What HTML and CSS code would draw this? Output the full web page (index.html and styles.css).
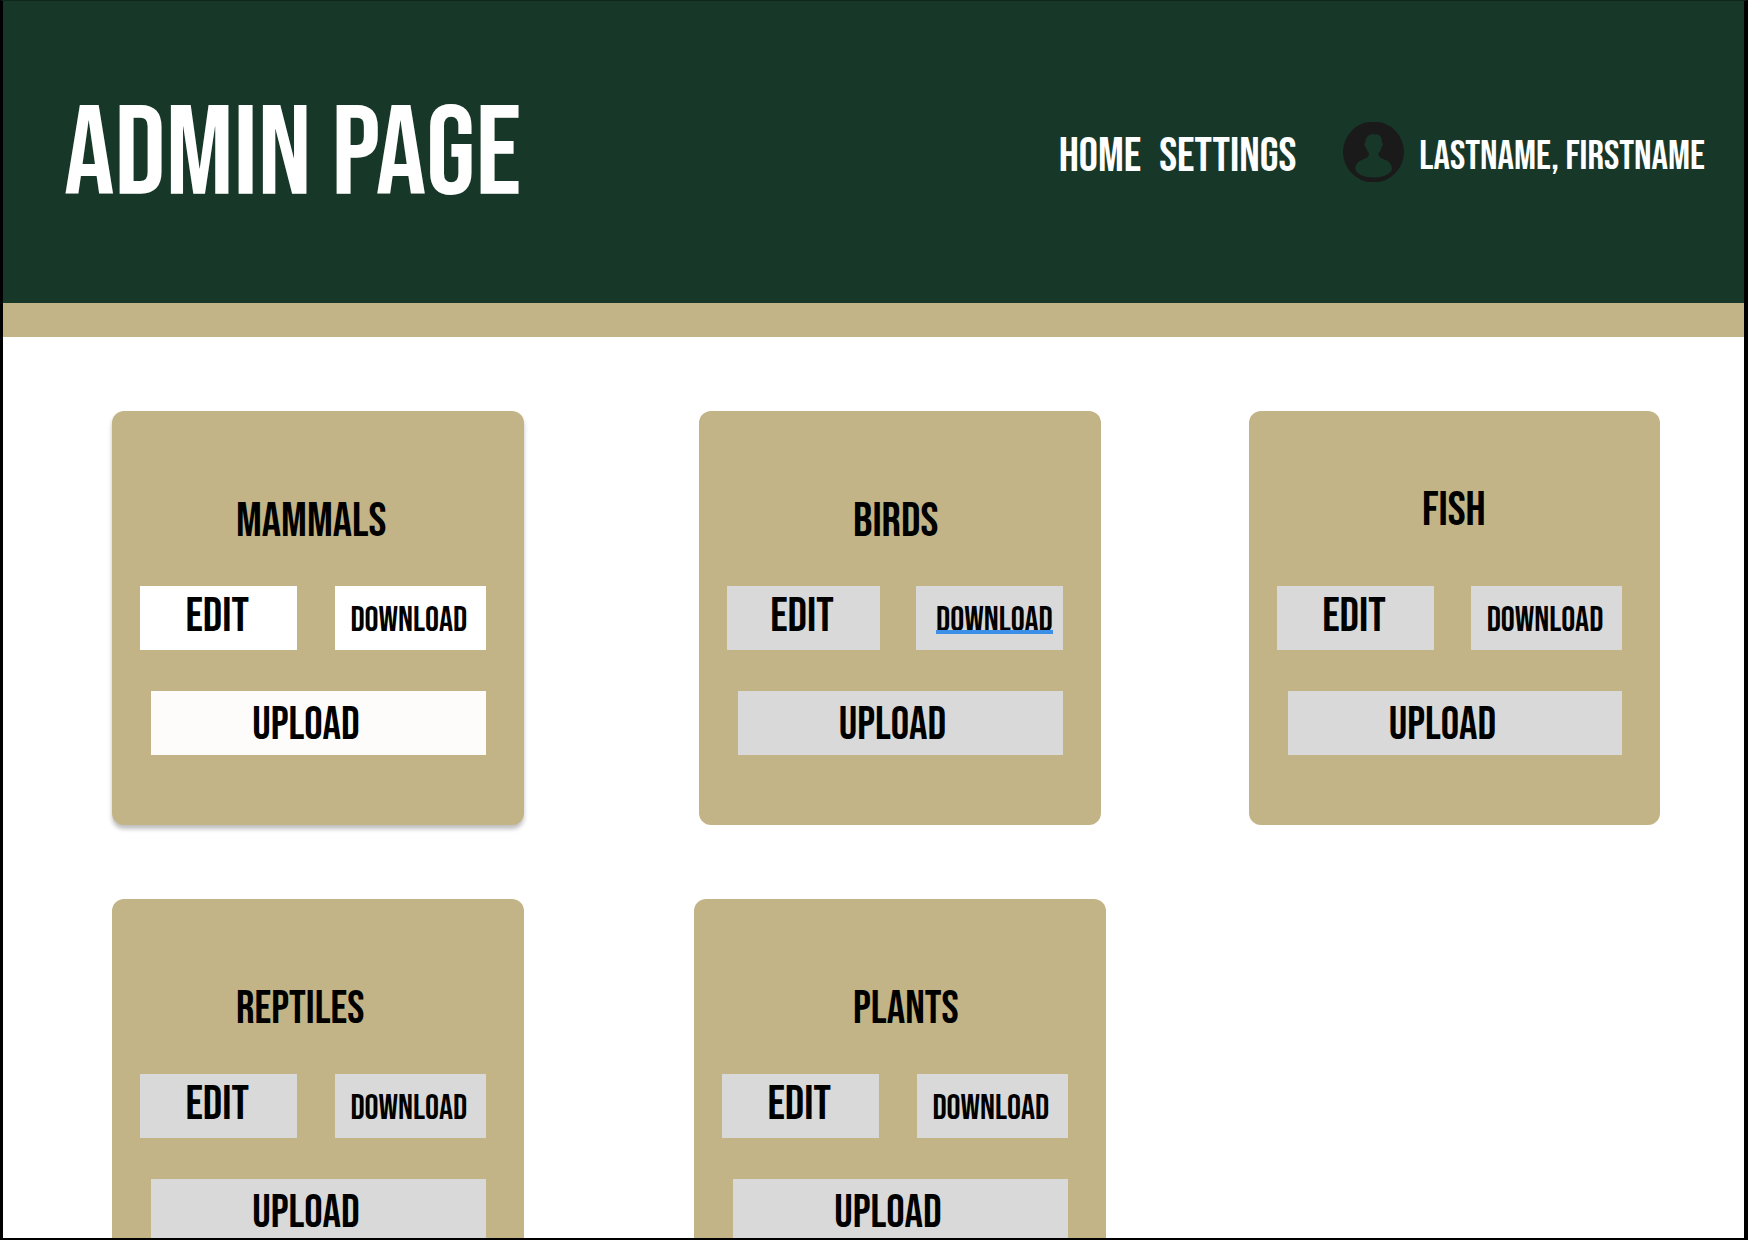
FILE: index.html
```html
<!DOCTYPE html>
<html lang="en">
<head>
<meta charset="utf-8">
<meta name="viewport" content="width=device-width, initial-scale=1">
<title>Admin Page</title>
<link rel="stylesheet" href="styles.css">
</head>
<body>
<div class="frame">
  <header class="header">
    <h1 class="header-title">ADMIN PAGE</h1>
    <nav class="nav">
      <a class="nav-link" href="#home">HOME</a>
      <a class="nav-link" href="#settings">SETTINGS</a>
    </nav>
    <a class="user" href="#profile">
      <svg class="avatar" viewBox="39 36 183 179" aria-hidden="true">
        <circle class="avatar-disc" cx="130.5" cy="125.5" r="91.5"/>
        <path class="avatar-figure" d="M131 72C120 71 106 78 106 97C103 98 103 109 108 112C110 120 113 124 116 128C118 138 114 142 104 146C90 151 76 158 76 176C78 190 98 202 131 202C164 202 184 190 186 176C186 158 172 151 158 146C148 142 144 138 146 128C150 124 153 120 154 112C159 109 160 98 156 97C157 78 146 72 138 73Z"/>
      </svg>
      <span>LASTNAME, FIRSTNAME</span>
    </a>
  </header>
  <main class="cards">
    <section class="card card-active">
      <h2 class="card-title">MAMMALS</h2>
      <div class="actions">
        <button class="btn btn-edit" type="button">EDIT</button>
        <button class="btn btn-download" type="button">DOWNLOAD</button>
        <button class="btn btn-upload" type="button">UPLOAD</button>
      </div>
    </section>
    <section class="card card-middle card-narrow">
      <h2 class="card-title">BIRDS</h2>
      <div class="actions">
        <button class="btn btn-edit" type="button">EDIT</button>
        <button class="btn btn-download" type="button"><span class="marked">DOWNLOAD</span></button>
        <button class="btn btn-upload" type="button">UPLOAD</button>
      </div>
    </section>
    <section class="card card-last">
      <h2 class="card-title">FISH</h2>
      <div class="actions">
        <button class="btn btn-edit" type="button">EDIT</button>
        <button class="btn btn-download" type="button">DOWNLOAD</button>
        <button class="btn btn-upload" type="button">UPLOAD</button>
      </div>
    </section>
    <section class="card card-small-title">
      <h2 class="card-title">REPTILES</h2>
      <div class="actions">
        <button class="btn btn-edit" type="button">EDIT</button>
        <button class="btn btn-download" type="button">DOWNLOAD</button>
        <button class="btn btn-upload" type="button">UPLOAD</button>
      </div>
    </section>
    <section class="card card-middle card-small-title">
      <h2 class="card-title">PLANTS</h2>
      <div class="actions">
        <button class="btn btn-edit" type="button">EDIT</button>
        <button class="btn btn-download" type="button">DOWNLOAD</button>
        <button class="btn btn-upload" type="button">UPLOAD</button>
      </div>
    </section>
  </main>
</div>
</body>
</html>
```
FILE: styles.css
```css
:root {
  --green: #173829;
  --gold: #c2b487;
  --button: #d9d9d9;
}

* {
  box-sizing: border-box;
}

body {
  margin: 0;
  background: #fff;
  color: #000;
  font-family: "Bebas Neue", Oswald, "Roboto Condensed", sans-serif;
}

.frame {
  height: 100vh;
  border: solid #000;
  border-width: 1px 4px 2px 3px;
  border-top-color: #10281c;
  overflow-y: auto;
  scrollbar-width: none;
}

.header {
  display: flex;
  align-items: center;
  min-height: 336px;
  padding: 10px 39px 0 61px;
  background: var(--green);
  border-bottom: 34px solid var(--gold);
  color: #fff;
}

.header-title {
  margin: 0 auto 0 0;
  font-size: 126px;
  line-height: 126px;
  font-weight: 400;
}

.nav {
  display: flex;
  gap: 18px;
  margin-right: 47px;
}

.nav-link {
  color: inherit;
  font-size: 48px;
  line-height: 56px;
  text-decoration: none;
}

.user {
  display: flex;
  align-items: center;
  gap: 15px;
  color: inherit;
  font-size: 41px;
  line-height: 56px;
  text-decoration: none;
}

.avatar {
  width: 61px;
  height: 60px;
  margin-bottom: 10px;
}

.avatar-disc {
  fill: #1a1a1a;
}

.avatar-figure {
  fill: var(--green);
}

/* Three card columns, separated by gutters of different widths */
.cards {
  display: grid;
  grid-template-columns: 412fr 170fr 412fr 143fr 411fr;
  row-gap: 74px;
  padding: 74px 84px 74px 109px;
}

.card {
  grid-column: 1;
  padding: 83px 38px 70px 28px;
  border-radius: 12px;
  background: var(--gold);
}

.card-middle {
  grid-column: 3;
}

.card-last {
  grid-column: 5;
  padding-top: 72px;
}

.card-narrow {
  margin: 0 5px;
}

.card-active {
  box-shadow: 0 4px 4px rgba(0, 0, 0, 0.25);
}

.card-title {
  margin: 0 0 36px;
  padding-left: 96px;
  font-size: 48px;
  line-height: 56px;
  font-weight: 400;
}

.card-small-title .card-title {
  font-size: 46px;
}

.card-middle .card-title {
  padding-left: 131px;
}

.card-narrow .card-title {
  padding-left: 126px;
}

.card-last .card-title {
  margin-bottom: 47px;
  padding-left: 145px;
}

.actions {
  display: grid;
  grid-template-columns: 157fr 37fr 151fr;
  row-gap: 41px;
}

.btn {
  height: 64px;
  padding: 0;
  border: 0;
  background: var(--button);
  color: #000;
  font-family: inherit;
  font-size: 48px;
  line-height: 48px;
  text-align: center;
}

.btn-edit {
  grid-column: 1;
  padding: 0 3px 2px 0;
}

.btn-download {
  grid-column: 3;
  padding: 6px 3px 0 0;
  font-size: 35px;
}

.btn-upload {
  grid-column: 1 / -1;
  margin-left: 11px;
  padding: 5px 25px 0 0;
  font-size: 46px;
}

.card-active .btn {
  background: #fff;
}

.card-active .btn-upload {
  background: #fdfcfb;
}

.card-narrow .btn-download {
  padding: 6px 0 0 10px;
}

.card-narrow .btn-upload {
  padding-right: 16px;
}

/* The rule is drawn over the foot of the letters */
.marked {
  position: relative;
}

.marked::after {
  content: "";
  position: absolute;
  left: 0;
  right: 0;
  bottom: 8px;
  height: 4px;
  background: #3b8fe6;
}
```
